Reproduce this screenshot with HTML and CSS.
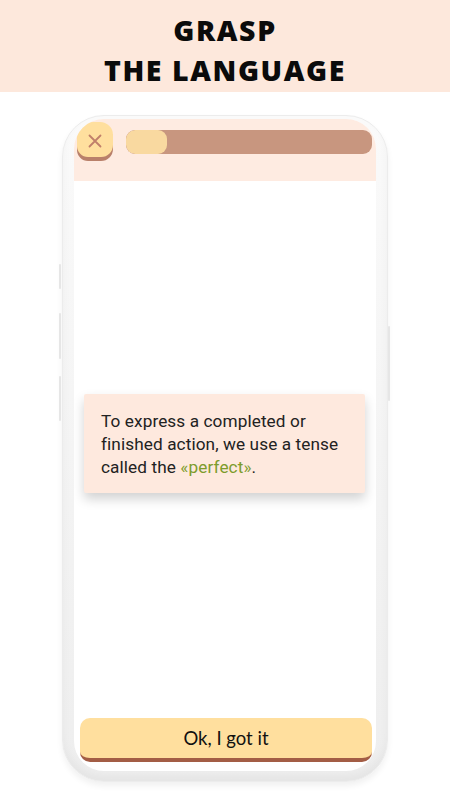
FILE: index.html
```html
<!DOCTYPE html>
<html lang="en">
<head>
<meta charset="utf-8">
<title>Grasp the language</title>
<link rel="stylesheet" href="styles.css">
</head>
<body>
<header class="banner">
  <h1 class="banner-title">GRASP<br>THE LANGUAGE</h1>
</header>
<main class="stage">
  <div class="phone">
    <span class="side-btn side-btn-1"></span>
    <span class="side-btn side-btn-2"></span>
    <span class="side-btn side-btn-3"></span>
    <span class="side-btn side-btn-r"></span>
    <div class="screen">
      <div class="topbar">
        <button class="close-btn" aria-label="Close">
          <svg width="14" height="14" viewBox="0 0 14 14" aria-hidden="true">
            <path d="M1.5 1.5 L12.5 12.5 M12.5 1.5 L1.5 12.5" stroke="#c07f6a" stroke-width="1.8" stroke-linecap="round" fill="none"/>
          </svg>
        </button>
        <div class="progress"><div class="progress-fill" style="width:41px"></div></div>
      </div>
      <div class="content">
        <div class="card">
          <p class="card-text">To express a completed or finished action, we use a tense called the <span class="hl">«perfect»</span>.</p>
        </div>
      </div>
      <div class="footer">
        <button class="ok-btn">Ok, I got it</button>
      </div>
    </div>
  </div>
</main>
</body>
</html>
```

FILE: styles.css
```css
* { box-sizing: border-box; }
html, body { margin: 0; padding: 0; }
body {
  width: 450px;
  height: 800px;
  background: #ffffff;
  overflow: hidden;
  font-family: Roboto, "Liberation Sans", sans-serif;
}
.banner {
  height: 92px;
  background: #fde8dc;
  padding-top: 10px;
}
.banner-title {
  margin: 0;
  text-align: center;
  font-family: "Open Sans", "Liberation Sans", sans-serif;
  font-weight: 800;
  font-size: 28.5px;
  line-height: 40px;
  letter-spacing: 1.6px;
  color: #0b0b0b;
}
.stage {
  padding-top: 23px;
}
.phone {
  position: relative;
  width: 326px;
  height: 667px;
  margin: 0 auto;
  padding: 3px 11px 10px 11px;
  border-radius: 42px;
  background: linear-gradient(to bottom, #fafafa, #eeeeee);
  border: 1px solid #ececec;
  box-shadow: 0 4px 6px rgba(0,0,0,0.06), inset 0 -6px 8px rgba(0,0,0,0.04);
}
.side-btn {
  position: absolute;
  width: 2px;
  background: #e6e6e6;
  border-radius: 1px;
}
.side-btn-1 { left: -4px; top: 148px; height: 25px; }
.side-btn-2 { left: -4px; top: 197px; height: 46px; }
.side-btn-3 { left: -4px; top: 260px; height: 45px; }
.side-btn-r { right: -3px; top: 210px; height: 75px; }
.screen {
  width: 100%;
  height: 100%;
  background: #ffffff;
  border-radius: 30px;
  overflow: hidden;
  display: flex;
  flex-direction: column;
}
.topbar {
  height: 62px;
  background: #feebe1;
  display: flex;
  align-items: flex-start;
  padding: 3px 4px 0 3px;
  gap: 13px;
}
.close-btn {
  width: 36px;
  height: 35px;
  border: none;
  padding: 0;
  background: #ffdf9e;
  border-radius: 16px 13px 12px 11px;
  box-shadow: 0 4px 0 #b9806a;
  display: flex;
  align-items: center;
  justify-content: center;
}
.close-btn svg { display: block; margin-top: 2px; }
.progress {
  flex: 1;
  height: 24px;
  margin-top: 8px;
  background: #c8967f;
  border-radius: 9px;
  overflow: hidden;
}
.progress-fill {
  height: 100%;
  background: #f9d9a0;
  border-radius: 9px;
}
.content {
  flex: 1;
  display: flex;
  align-items: center;
  padding: 0 11px 12px 10px;
}
.card {
  width: 100%;
  background: #fee9de;
  border-radius: 2px;
  padding: 16px 12px 14px 17px;
  box-shadow: 0 6px 12px rgba(0,0,0,0.18);
}
.card-text {
  margin: 0;
  font-family: Roboto, "Liberation Sans", sans-serif;
  font-size: 17.2px;
  line-height: 23px;
  letter-spacing: 0.1px;
  color: #222222;
}
.hl { color: #7d9c2c; }
.footer {
  padding: 0 4px 9px 6px;
}
.ok-btn {
  width: 100%;
  height: 44px;
  border: none;
  border-radius: 10px;
  background: #ffdf9e;
  border-bottom: 4px solid #a35d45;
  font-family: Lato, "Open Sans", sans-serif;
  font-size: 18.5px;
  color: #111111;
  padding: 0;
}
```
